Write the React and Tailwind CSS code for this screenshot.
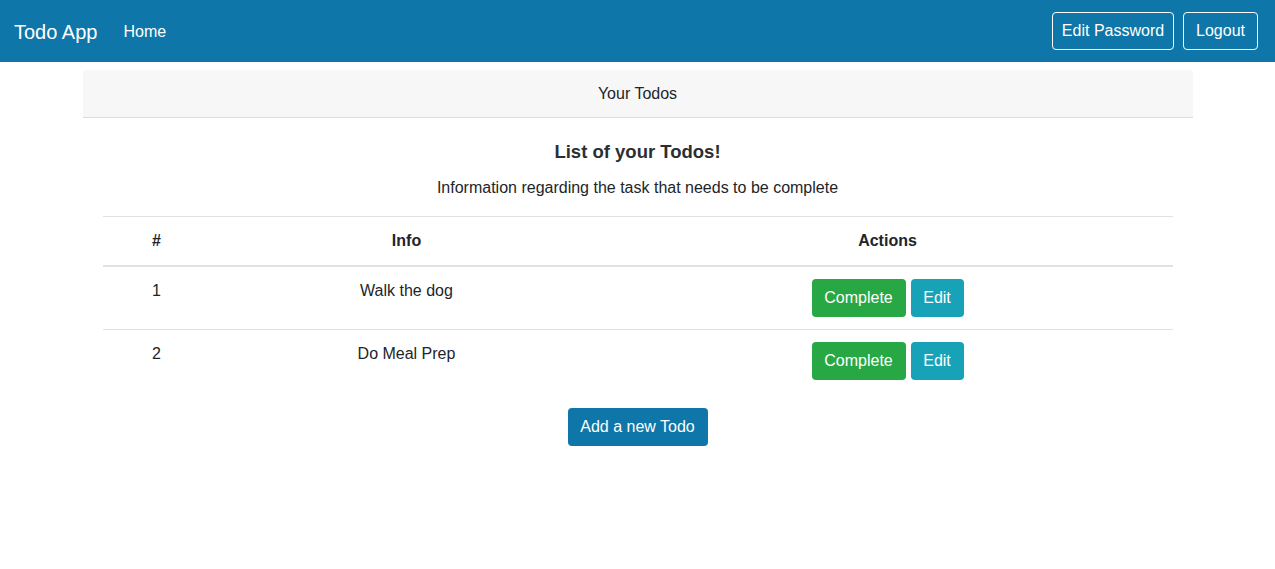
const todos = [
  { id: 1, info: "Walk the dog" },
  { id: 2, info: "Do Meal Prep" },
];

export default function App() {
  return (
    <div className="min-h-screen bg-white text-[#212529] text-[16px] leading-6 font-['Liberation_Sans',sans-serif]">
      <nav className="flex items-center justify-between h-[62px] bg-[#0e76a8] pl-[14px] pr-[17px]">
        <div className="flex items-center">
          <span className="text-[20px] leading-[30px] text-white mr-[26px] mt-[2px]">Todo App</span>
          <a className="text-white mt-[1px]">Home</a>
        </div>
        <div className="flex items-center gap-[9px]">
          <button className="h-[38px] w-[122px] border border-white rounded text-white">Edit Password</button>
          <button className="h-[38px] w-[75px] border border-white rounded text-white">Logout</button>
        </div>
      </nav>

      <div className="mx-auto w-[1110px] mt-2">
        <div className="h-12 flex items-center justify-center bg-[#f7f7f7] border-b border-[#dcdcdc] rounded-t pt-[1px]">
          Your Todos
        </div>
        <div className="px-5 pt-[22px] pb-5 text-center">
          <h5 className="text-[18.5px] leading-6 font-semibold text-[#2b2f33] mb-3 mt-0">List of your Todos!</h5>
          <p className="mb-4">Information regarding the task that needs to be complete</p>

          <table className="w-full border-collapse">
            <thead>
              <tr className="border-t border-[#dee2e6]">
                <th className="w-[108px] p-3 font-bold border-b-2 border-[#dee2e6]">#</th>
                <th className="w-[392px] p-3 font-bold border-b-2 border-[#dee2e6]">Info</th>
                <th className="p-3 font-bold border-b-2 border-[#dee2e6]">Actions</th>
              </tr>
            </thead>
            <tbody>
              {todos.map((t) => (
                <tr key={t.id} className="border-t border-[#dee2e6] first:border-t-0">
                  <td className="p-3 align-top">{t.id}</td>
                  <td className="p-3 align-top">{t.info}</td>
                  <td className="p-3 align-top">
                    <div className="flex justify-center gap-[5px]">
                      <button className="h-[38px] w-[94px] rounded bg-[#28a745] text-white">Complete</button>
                      <button className="h-[38px] w-[53px] rounded bg-[#17a2b8] text-white">Edit</button>
                    </div>
                  </td>
                </tr>
              ))}
            </tbody>
          </table>

          <button className="mt-4 h-[38px] w-[140px] rounded bg-[#0e76a8] text-white">Add a new Todo</button>
        </div>
      </div>
    </div>
  );
}
